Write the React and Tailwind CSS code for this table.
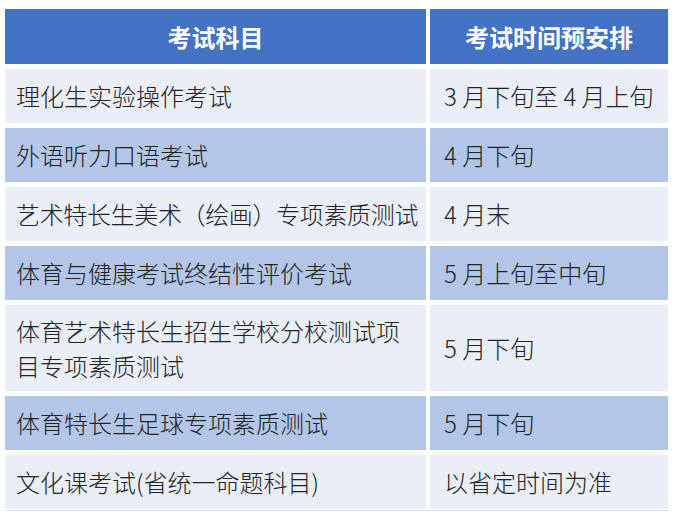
import React from "react";

const rows = [
  { a: "理化生实验操作考试", b: "3 月下旬至 4 月上旬", dark: false, h: "h-[54px]" },
  { a: "外语听力口语考试", b: "4 月下旬", dark: true, h: "h-[54px]" },
  { a: "艺术特长生美术（绘画）专项素质测试", b: "4 月末", dark: false, h: "h-[54px]", tight: true },
  { a: "体育与健康考试终结性评价考试", b: "5 月上旬至中旬", dark: true, h: "h-[54px]" },
  { a: ["体育艺术特长生招生学校分校测试项", "目专项素质测试"], b: "5 月下旬", dark: false, h: "h-[86px]" },
  { a: "体育特长生足球专项素质测试", b: "5 月下旬", dark: true, h: "h-[54px]" },
  { a: "文化课考试(省统一命题科目)", b: "以省定时间为准", dark: false, h: "h-[54px]" },
];

export default function App() {
  return (
    <div
      className="w-[676px] h-[517px] bg-white pl-[5px] pt-[9px]"
      style={{ fontFamily: '"Noto Sans CJK SC", "Noto Sans", sans-serif' }}
    >
      <div className="grid grid-cols-[421px_238px] gap-x-[4px] gap-y-[5px] border-b border-[#d9dde3] pb-[1px] w-[663px]">
        <div className="h-[55px] bg-[#4472c4] flex items-center justify-center text-white font-bold text-[24px] leading-none">
          考试科目
        </div>
        <div className="h-[55px] bg-[#4472c4] flex items-center justify-center text-white font-bold text-[24px] leading-none">
          考试时间预安排
        </div>
        {rows.map((r, i) => {
          const bg = r.dark ? "bg-[#b4c6e7]" : "bg-[#e9eef7]";
          return (
            <React.Fragment key={i}>
              <div className={`${r.h} ${bg} flex items-center pl-[11px] text-[24px] font-light text-[#222222] whitespace-nowrap`}>
                {Array.isArray(r.a) ? (
                  <div className="leading-[35px]">
                    {r.a[0]}
                    <br />
                    {r.a[1]}
                  </div>
                ) : (
                  <span className={r.tight ? "leading-none tracking-[-0.35px]" : "leading-none"}>{r.a}</span>
                )}
              </div>
              <div className={`${r.h} ${bg} flex items-center pl-[14px] text-[24px] font-light text-[#222222] whitespace-nowrap`}>
                <span className="leading-none">{r.b}</span>
              </div>
            </React.Fragment>
          );
        })}
      </div>
    </div>
  );
}
